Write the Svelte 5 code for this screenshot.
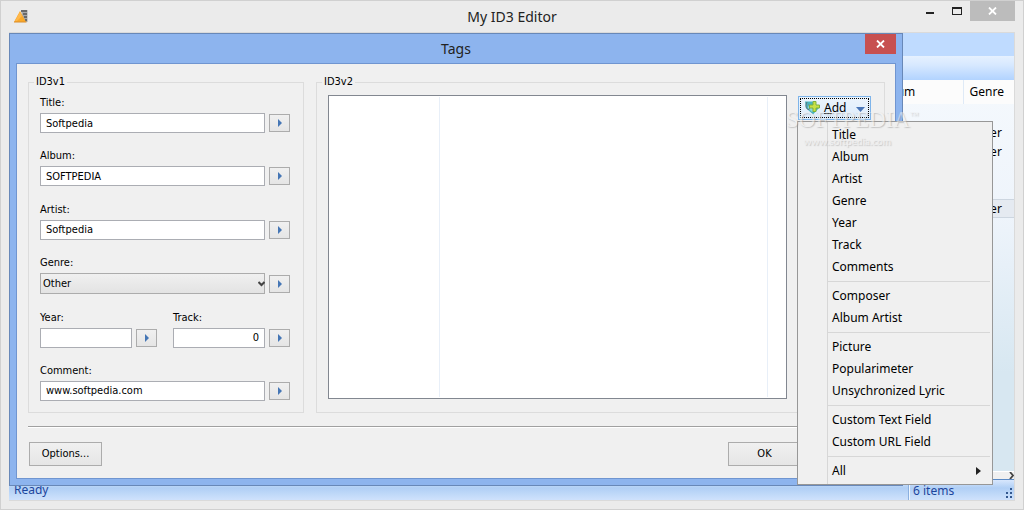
<script lang="ts">
  type Field = { id: string; label: string; value: string; numeric?: boolean };

  const textFields: Field[] = [
    { id: "title", label: "Title:", value: "Softpedia" },
    { id: "album", label: "Album:", value: "SOFTPEDIA" },
    { id: "artist", label: "Artist:", value: "Softpedia" },
  ];

  const numberFields: Field[] = [
    { id: "year", label: "Year:", value: "" },
    { id: "track", label: "Track:", value: "0", numeric: true },
  ];

  const commentField: Field = { id: "comment", label: "Comment:", value: "www.softpedia.com" };

  const menuGroups = [
    ["Title", "Album", "Artist", "Genre", "Year", "Track", "Comments"],
    ["Composer", "Album Artist"],
    ["Picture", "Popularimeter", "Unsychronized Lyric"],
    ["Custom Text Field", "Custom URL Field"],
    ["All"],
  ];

  const rows = ["", "Other", "Other", "", "", "Other"];
  const selectedRow = 5;

  let menuOpen = $state(true);
</script>

{#snippet copyButton(id: string)}
  <button type="button" class="copy" aria-labelledby="label-{id}">
    <svg width="4" height="8" viewBox="0 0 4 8"><path d="M0 0 L4 4 L0 8 Z" fill="#4576b5" /></svg>
  </button>
{/snippet}

{#snippet textField(field: Field)}
  <div class="field">
    <label id="label-{field.id}" for={field.id}>{field.label}</label>
    <div class="line">
      <input id={field.id} type="text" class:numeric={field.numeric} value={field.value} />
      {@render copyButton(field.id)}
    </div>
  </div>
{/snippet}

{#snippet cross()}
  <svg width="9" height="8" viewBox="0 0 9 8">
    <path d="M1 0.5 L8 7.5 M8 0.5 L1 7.5" stroke="#fff" stroke-width="1.8" />
  </svg>
{/snippet}

<div class="window">
  <header class="titlebar">
    <svg class="app-icon" width="14" height="13" viewBox="0 0 14 13">
      <path d="M7 0 H13.500 V12 H9 Z" fill="#a8a8a8" />
      <path d="M7 1 H13 M9 4 H13 M10 7 H13 M11 10 H13" stroke="#555" stroke-width="1.500" />
      <path d="M6 1 L12 12 H0 Z" fill="#fba928" />
      <path d="M6 2 L8 6 L3 11 H1 Z" fill="#ffb84c" />
      <path d="M0 12 H12.500" stroke="#d98d2c" />
    </svg>
    <h1>My ID3 Editor</h1>
    <div class="window-buttons">
      <button type="button" aria-label="Minimize"><span class="minimize"></span></button>
      <button type="button" aria-label="Maximize"><span class="maximize"></span></button>
      <button type="button" class="close" aria-label="Close">{@render cross()}</button>
    </div>
  </header>

  <div class="client">
    <div class="library">
      <div class="menubar"></div>
      <div class="toolbar"></div>
      <div class="files">
        <table>
          <thead>
            <tr><th class="name"></th><th class="album">Album</th><th class="genre">Genre</th></tr>
          </thead>
          <tbody>
            {#each rows as genre, i}
              <tr class:selected={i === selectedRow}><td></td><td></td><td>{genre}</td></tr>
            {/each}
          </tbody>
        </table>
      </div>
      <div class="scrollbar">
        <svg width="5" height="7" viewBox="0 0 5 7">
          <path d="M1 0 L4 3.500 L1 7" fill="none" stroke="#444" stroke-width="1.800" />
        </svg>
      </div>
      <footer class="statusbar">
        <span class="ready">Ready</span>
        <span class="count">6 items</span>
        <svg class="grip" width="8" height="12" viewBox="0 0 8 12">
          <path
            d="M6 0h2v2h-2z M2 4h2v2h-2z M6 4h2v2h-2z M2 8h2v2h-2z M6 8h2v2h-2z"
            fill="#33588f"
          />
        </svg>
      </footer>
    </div>

    <section class="dialog" role="dialog" aria-labelledby="dialog-title">
      <header class="dialog-title">
        <h2 id="dialog-title">Tags</h2>
        <button type="button" aria-label="Close">{@render cross()}</button>
      </header>

      <div class="dialog-body">
        <div class="groups">
          <fieldset class="v1">
            <legend>ID3v1</legend>
            <div class="fields">
              {#each textFields as field}
                {@render textField(field)}
              {/each}

              <div class="field">
                <label id="label-genre" for="genre">Genre:</label>
                <div class="line">
                  <div class="combo">
                    <select id="genre"><option>Other</option></select>
                    <svg width="7" height="6" viewBox="0 0 7 6">
                      <path d="M0.500 1 L3.500 4 L6.500 1" fill="none" stroke="#444" stroke-width="2" />
                    </svg>
                  </div>
                  {@render copyButton("genre")}
                </div>
              </div>

              <div class="pair">
                {#each numberFields as field}
                  {@render textField(field)}
                {/each}
              </div>

              {@render textField(commentField)}
            </div>
          </fieldset>

          <fieldset class="v2">
            <legend>ID3v2</legend>
            <div class="frames">
              <div class="list"><span></span><span></span><span></span></div>
              <div class="add-wrap">
                <button type="button" class="add" onclick={() => (menuOpen = !menuOpen)}>
                  <svg width="15" height="14" viewBox="0 0 15 14">
                    <path d="M0 0.500 H8 L14 7 L8 13.500 L1 7 Z" fill="#48b4bd" />
                    <path d="M3 3 L9 9 L7 11 L3 7 Z" fill="#8fd6da" />
                    <path
                      d="M2 1 C0.500 4 0.500 7 3 8.500 C5 9 5 6 3.500 3.500"
                      fill="none"
                      stroke="#5d6f7c"
                    />
                    <path
                      d="M8 0.500h3v3.500h3.500v3h-3.500v3.500h-3v-3.500h-3.500v-3h3.500z"
                      fill="#c8e046"
                      stroke="#7fb23a"
                    />
                  </svg>
                  <span><u>A</u>dd</span>
                  <svg class="drop" width="9" height="5" viewBox="0 0 9 5">
                    <path d="M0 0 H9 L4.500 5 Z" fill="#4a76b8" />
                  </svg>
                </button>

                {#if menuOpen}
                  <div class="menu" role="menu">
                    {#each menuGroups as group}
                      <div class="menu-group">
                        {#each group as item}
                          <button type="button" role="menuitem">
                            {item}
                            {#if item === "All"}
                              <svg width="5" height="8" viewBox="0 0 5 8">
                                <path d="M0 0 L5 4 L0 8 Z" fill="#222" />
                              </svg>
                            {/if}
                          </button>
                        {/each}
                      </div>
                    {/each}
                  </div>
                {/if}

                <div class="watermark">
                  <span class="brand">SOFTPEDIA<sup>™</sup></span>
                  <span class="site">www.softpedia.com</span>
                </div>
              </div>
            </div>
          </fieldset>
        </div>

        <div class="actions">
          <button type="button">Options...</button>
          <button type="button">OK</button>
        </div>
      </div>
    </section>
  </div>
</div>

<style>
  :global(body) {
    background: #ebebeb;
  }

  .window,
  .window * {
    box-sizing: border-box;
  }

  .window {
    display: flex;
    flex-direction: column;
    min-height: 100vh;
    padding: 0 8px 8px;
    border: 1px solid #d0d0d0;
    overflow: hidden;
    background: #ebebeb;
    color: #000;
    font: 12px/16px "Noto Sans", "Open Sans", sans-serif;
  }

  svg {
    display: block;
    flex: none;
  }

  button,
  input,
  select {
    margin: 0;
    border-radius: 0;
    color: inherit;
    font: inherit;
  }

  h1,
  h2 {
    margin: 0;
    color: #222;
    font-size: 14px;
    font-weight: 400;
    line-height: 20px;
    text-align: center;
  }

  .titlebar {
    display: grid;
    grid-template-columns: 1fr auto 1fr;
    align-items: center;
    height: 31px;
  }

  .app-icon {
    margin-left: 5px;
  }

  .window-buttons {
    display: flex;
    align-self: start;
    justify-content: flex-end;
  }

  .window-buttons button {
    display: grid;
    place-items: center;
    width: 27px;
    height: 20px;
    padding: 0;
    border: 0;
    background: none;
  }

  .window-buttons .close {
    width: 45px;
    background: #bcbcbc;
  }

  .minimize {
    width: 8px;
    height: 2px;
    margin-top: 4px;
    background: #222;
  }

  .maximize {
    width: 10px;
    height: 8px;
    border: 1px solid #222;
    border-top-width: 2px;
  }

  .client {
    display: grid;
    flex: 1;
    border: 1px solid #dadada;
    border-left: 0;
  }

  .library,
  .dialog {
    grid-area: 1 / 1;
  }

  .library {
    display: flex;
    flex-direction: column;
    min-width: 0;
  }

  .menubar {
    height: 23px;
    background: #bfdbff;
  }

  .toolbar {
    height: 24px;
    background: linear-gradient(#e6f1ff, #d6e8ff 40%, #b2d3ff);
  }

  .files {
    flex: 1;
    background: linear-gradient(#f5f9fd, #eef4fb 35%, #d7e7f1 75%);
  }

  table {
    width: 100%;
    table-layout: fixed;
    border-collapse: collapse;
  }

  th {
    height: 24px;
    padding: 0 6px;
    background: #fcfcfc;
    font-weight: 400;
    text-align: left;
  }

  th + th {
    border-left: 1px solid #dfeaf7;
  }

  td {
    height: 19px;
    padding: 0 6px;
    line-height: 18px;
  }

  .album {
    width: 91px;
  }

  .genre {
    width: 51px;
  }

  .selected {
    background: #e5eaf1;
    box-shadow: inset 0 1px #cdd6e0, inset 0 -1px #cdd6e0;
  }

  .scrollbar {
    display: flex;
    justify-content: flex-end;
    height: 9px;
    border-top: 1px solid #fff;
    border-bottom: 1px solid #5b8ac4;
    background: #f0f0f0;
  }

  .statusbar {
    display: flex;
    align-items: center;
    height: 20px;
    background: linear-gradient(#d8e7fd, #b0cff5 40%, #cfe2fc);
    color: #1c459c;
    line-height: 22px;
  }

  .ready {
    flex: 1;
    padding-left: 5px;
  }

  .count {
    width: 96px;
    height: 20px;
    padding-left: 4px;
    border-left: 1px solid #8bb0e0;
    box-shadow: inset 1px 0 #eef6ff;
  }

  .grip {
    align-self: flex-end;
    margin-right: 2px;
  }

  .dialog {
    z-index: 1;
    display: flex;
    flex-direction: column;
    margin: 0 111px 14px 0;
    padding: 0 6px 6px;
    border: 1px solid #6888b8;
    background: #8db4ee;
  }

  .dialog-title {
    display: grid;
    grid-template-columns: 31px 1fr 31px;
    height: 29px;
  }

  .dialog-title h2 {
    grid-column: 2;
    line-height: 29px;
  }

  .dialog-title button {
    display: grid;
    place-items: center;
    height: 20px;
    padding: 0;
    border: 0;
    background: #c75050;
  }

  .dialog-body {
    display: flex;
    flex: 1;
    flex-direction: column;
    padding: 11px 10px 12px 11px;
    border: 1px solid #7095d0;
    background: #f0f0f0;
    font: 11px/16px "DejaVu Sans Condensed", "DejaVu Sans", sans-serif;
  }

  .groups {
    display: flex;
    flex: 1;
    gap: 12px;
  }

  fieldset {
    display: flex;
    flex-direction: column;
    min-width: 0;
    margin: 0;
    padding: 0;
    border: 1px solid #dcdcdc;
  }

  legend {
    margin-left: 5px;
    padding: 0 2px;
    line-height: 14px;
  }

  .v1 {
    width: 276px;
  }

  .v2 {
    flex: 1;
  }

  .fields {
    display: flex;
    flex: 1;
    flex-direction: column;
    justify-content: space-between;
    gap: 10px;
    padding: 6px 13px 11px 11px;
  }

  .field {
    display: flex;
    flex-direction: column;
    gap: 2px;
    min-width: 0;
  }

  .line {
    display: flex;
    align-items: center;
    gap: 4px;
  }

  .pair {
    display: grid;
    grid-template-columns: 1fr 1fr;
    gap: 16px;
  }

  input {
    flex: 1;
    width: 0;
    min-width: 0;
    height: 20px;
    padding: 0 5px;
    border: 1px solid #abadb3;
    background: #fff;
  }

  .numeric {
    text-align: right;
  }

  .copy {
    display: grid;
    place-items: center;
    width: 21px;
    height: 18px;
    padding: 0;
    border: 1px solid #acacac;
    background: linear-gradient(#f0f0f0, #e5e5e5);
  }

  .combo {
    position: relative;
    flex: 1;
  }

  select {
    display: block;
    width: 100%;
    height: 21px;
    padding: 1px 2px 0;
    border: 1px solid #acacac;
    appearance: none;
    background: linear-gradient(#f0f0f0, #e3e3e3);
  }

  .combo svg {
    position: absolute;
    top: 8px;
    right: 0;
    pointer-events: none;
  }

  .frames {
    display: flex;
    flex: 1;
    gap: 11px;
    padding: 6px 13px 13px 11px;
  }

  .list {
    display: grid;
    flex: 1;
    grid-template-columns: 110px 1fr 19px;
    padding: 1px 0;
    border: 1px solid #828790;
    background: #fff;
  }

  .list span + span {
    border-left: 1px solid #e8eff8;
  }

  .add-wrap {
    position: relative;
    align-self: flex-start;
    width: 73px;
    padding-top: 1px;
  }

  .add {
    display: flex;
    align-items: center;
    width: 100%;
    height: 24px;
    padding: 0 5px 0 6px;
    border: 1px solid #7eb4ea;
    outline: 1px dotted #000;
    outline-offset: -3px;
    background: linear-gradient(#ecf4fc, #dcecfc);
    font: 12px/16px "Noto Sans", "Open Sans", sans-serif;
    text-align: left;
  }

  .add span {
    flex: 1;
    padding-left: 4px;
  }

  .drop {
    margin-top: 3px;
  }

  .menu {
    position: absolute;
    z-index: 2;
    top: 100%;
    left: -1px;
    width: 196px;
    margin-top: 1px;
    padding: 2px;
    border: 1px solid #979797;
    background: linear-gradient(90deg, transparent 29px, #d7d7d7 29px, #d7d7d7 30px, transparent 30px)
      #f0f0f0;
    font: 12px/16px "Noto Sans", "Open Sans", sans-serif;
  }

  .menu-group + .menu-group::before {
    content: "";
    display: block;
    height: 1px;
    margin: 3px 0 3px 28px;
    background: #d7d7d7;
  }

  .menu button {
    display: flex;
    align-items: center;
    justify-content: space-between;
    width: 100%;
    height: 22px;
    padding: 0 9px 0 32px;
    border: 0;
    background: none;
    white-space: nowrap;
  }

  .menu button:hover {
    background: #d1e8ff;
  }

  .watermark {
    position: absolute;
    z-index: 3;
    top: 12px;
    left: -12px;
    display: grid;
    justify-items: center;
    color: #f0f0f0;
    opacity: 0.5;
    text-shadow: 1px 1px 1px #999;
    pointer-events: none;
    white-space: nowrap;
  }

  .brand {
    font-family: "Liberation Serif", serif;
    font-size: 23px;
    line-height: 26px;
  }

  .brand sup {
    font-size: 9px;
    line-height: 0;
  }

  .site {
    margin-right: 10px;
    font-family: Lato, sans-serif;
    font-size: 10px;
    line-height: 16px;
  }

  .actions {
    display: flex;
    justify-content: space-between;
    margin-top: 13px;
    padding: 15px 84px 0 1px;
    border-top: 1px solid #a0a0a0;
    box-shadow: inset 0 1px #fff;
  }

  .actions button {
    width: 73px;
    height: 24px;
    padding: 0;
    border: 1px solid #acacac;
    background: linear-gradient(#f0f0f0, #e5e5e5);
  }
</style>
